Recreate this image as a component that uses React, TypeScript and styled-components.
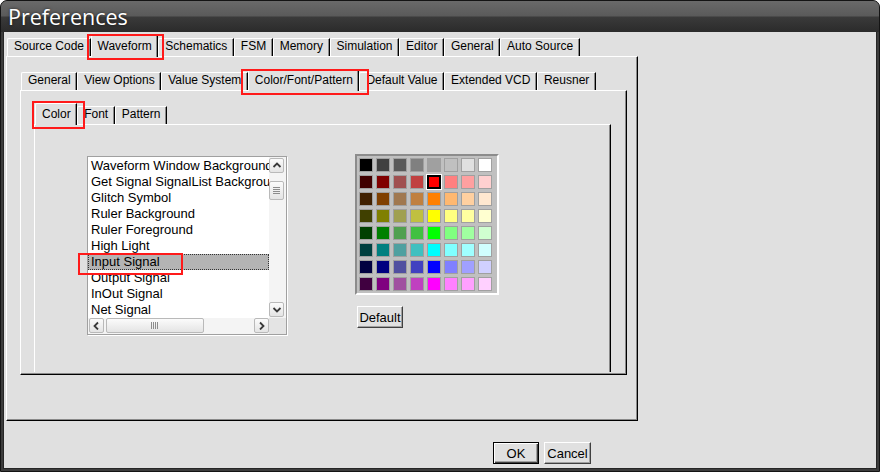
import React from "react";
import styled, { createGlobalStyle, css } from "styled-components";

const GlobalStyle = createGlobalStyle`
  html, body {
    margin: 0;
    padding: 0;
    background: #fff;
  }
  body {
    font-family: "Liberation Sans", Arial, sans-serif;
    font-size: 12px;
    color: #000;
  }
`;

const OUTER_TABS = ["Source Code", "Waveform", "Schematics", "FSM", "Memory", "Simulation", "Editor", "General", "Auto Source"];
const WAVE_TABS = ["General", "View Options", "Value System", "Color/Font/Pattern", "Default Value", "Extended VCD", "Reusner"];
const CFP_TABS = ["Color", "Font", "Pattern"];

const ITEMS = [
  "Waveform Window Background",
  "Get Signal SignalList Background",
  "Glitch Symbol",
  "Ruler Background",
  "Ruler Foreground",
  "High Light",
  "Input Signal",
  "Output Signal",
  "InOut Signal",
  "Net Signal",
];

const PALETTE = [
  ["#000000", "#404040", "#5a5a5a", "#808080", "#a0a0a0", "#c0c0c0", "#e0e0e0", "#ffffff"],
  ["#400000", "#800000", "#a05050", "#c04040", "#ff0000", "#ff8080", "#ffa0a0", "#ffd0d0"],
  ["#402000", "#804000", "#a07850", "#c08040", "#ff8000", "#ffb870", "#ffd0a0", "#ffe8d0"],
  ["#404000", "#808000", "#a0a050", "#c0c040", "#ffff00", "#ffff80", "#ffffa0", "#ffffd0"],
  ["#004000", "#008000", "#50a050", "#40c040", "#00ff00", "#80ff80", "#a0ffa0", "#d0ffd0"],
  ["#004040", "#008080", "#50a0a0", "#40c0c0", "#00ffff", "#80ffff", "#a0ffff", "#d0ffff"],
  ["#000040", "#000080", "#5050a0", "#4040c0", "#0000ff", "#8080ff", "#a0a0ff", "#d0d0ff"],
  ["#400040", "#800080", "#a050a0", "#c040c0", "#ff00ff", "#ff80ff", "#ffa0ff", "#ffd0ff"],
];

// red boxes drawn over the screenshot (annotations)
const MARKS = [
  { x: 86, y: 33, w: 77, h: 26 },
  { x: 240, y: 68, w: 128, h: 26 },
  { x: 31, y: 100, w: 53, h: 28 },
  { x: 77, y: 252, w: 105, h: 22 },
];

const Window = styled.div`
  position: relative;
  width: 880px;
  height: 472px;
  box-sizing: border-box;
  display: flex;
  flex-direction: column;
  background: #3c3c3c;
  border: 1px solid #141414;
  border-radius: 7px 7px 0 0;
  padding: 0 2px 2px;
  overflow: hidden;
`;

const TitleBar = styled.div`
  flex: none;
  height: 31px;
  margin: 0 -2px;
  padding: 0 7px;
  display: flex;
  align-items: center;
  background: linear-gradient(#6a6a6a 0, #5a5a5a 48%, #3a3a3a 52%, #2b2b2b 100%);
  color: #fff;
  font-family: "Open Sans", "Noto Sans", sans-serif;
  font-size: 21.5px;
  text-shadow: 0 0 3px rgba(0, 0, 0, 0.7);
`;

const Client = styled.div`
  flex: 1;
  display: flex;
  flex-direction: column;
  background: #e0e0e0;
  border: 1px solid #262626;
  border-top: none;
  padding: 3px 0 0 2px;
`;

const Notebook = styled.div<{ $width?: number }>`
  display: flex;
  flex-direction: column;
  ${(p) => p.$width && css`width: ${p.$width}px;`}
`;

const TabStrip = styled.div`
  display: flex;
  align-items: flex-end;
  height: 21px;
  padding-left: 1px;
`;

const Tab = styled.div<{ $active?: boolean }>`
  box-sizing: border-box;
  height: 18px;
  padding: 0 5.5px 3px 6px;
  display: flex;
  align-items: flex-end;
  line-height: 14px;
  white-space: nowrap;
  background: #e0e0e0;
  border-top: 1px solid #fff;
  border-left: 1px solid #fff;
  border-right: 1px solid #000;
  border-top-left-radius: 2px;
  box-shadow: inset -1px 0 0 #8a8a8a;
  ${(p) =>
    p.$active &&
    css`
      position: relative;
      z-index: 1;
      height: 22px;
      padding-bottom: 4px;
      margin-bottom: -1px;
    `}
`;

const Panel = styled.div<{ $pad: string; $open?: boolean }>`
  display: flex;
  flex-direction: column;
  padding: ${(p) => p.$pad};
  border-top: 1px solid #fff;
  border-left: 1px solid #fff;
  border-right: 1px solid #000;
  border-bottom: ${(p) => (p.$open ? "none" : "1px solid #000")};
  box-shadow: ${(p) => (p.$open ? "inset -1px 0 0 #8a8a8a" : "inset -1px -1px 0 #8a8a8a")};
`;

const ColorPage = styled.div`
  display: flex;
  align-items: flex-start;
  gap: 68px;
`;

const ListBox = styled.div`
  margin-top: 2px;
  width: 200px;
  height: 179px;
  box-sizing: border-box;
  border: 1px solid #a0a0a0;
  box-shadow: 1px 1px 0 #fff;
  background: #fff;
  display: grid;
  grid-template-columns: 181px 17px;
  grid-template-rows: 161px 16px;
`;

const Items = styled.div`
  overflow: hidden;
  padding-top: 1px;
`;

const Item = styled.div<{ $selected?: boolean }>`
  height: 16px;
  line-height: 16px;
  padding-left: 3px;
  font-size: 13px;
  white-space: nowrap;
  overflow: hidden;
  ${(p) =>
    p.$selected &&
    css`
      background: #b4b4b4;
      outline: 1px dotted #333;
      outline-offset: -1px;
    `}
`;

const VScroll = styled.div`
  display: flex;
  flex-direction: column;
  padding: 1px 2px 1px 0;
  background: #f4f4f4;
`;

const HScroll = styled.div`
  display: flex;
  padding: 0 0 0 1px;
  background: #f4f4f4;
`;

const Track = styled.div<{ $vertical?: boolean }>`
  flex: 1;
  display: flex;
  flex-direction: ${(p) => (p.$vertical ? "column" : "row")};
`;

const ScrollButton = styled.div`
  flex: none;
  width: 15px;
  height: 15px;
  box-sizing: border-box;
  display: flex;
  align-items: center;
  justify-content: center;
  border: 1px solid #b9b9b9;
  border-radius: 2px;
  background: linear-gradient(#fbfbfb, #e4e4e4);
`;

const Thumb = styled(ScrollButton)<{ $vertical?: boolean; $offset: number; $size: number }>`
  ${(p) =>
    p.$vertical
      ? css`
          margin-top: ${p.$offset}px;
          height: ${p.$size}px;
        `
      : css`
          margin-left: ${p.$offset}px;
          width: ${p.$size}px;
        `}
`;

const Corner = styled.div`
  background: #e4e4e4;
`;

const RightColumn = styled.div`
  display: flex;
  flex-direction: column;
  align-items: flex-start;
`;

const Palette = styled.div`
  width: 144px;
  box-sizing: border-box;
  padding: 2px;
  border: 2px solid;
  border-color: #8c8c8c #fff #fff #8c8c8c;
  background: #c0c0c0;
  display: grid;
  grid-template-columns: repeat(8, 14px);
  gap: 3px;
`;

const Swatch = styled.div<{ $color: string; $selected?: boolean }>`
  width: 14px;
  height: 14px;
  box-sizing: border-box;
  background: ${(p) => p.$color};
  border: 1px solid #a0a0a0;
  ${(p) =>
    p.$selected &&
    css`
      border: 2px solid #000;
      box-shadow: 0 0 0 1px #fff;
    `}
`;

const Button = styled.button<{ $default?: boolean; $width?: number }>`
  flex: none;
  width: ${(p) => p.$width ?? 46}px;
  height: 22px;
  padding: 0;
  font-family: "Liberation Sans", Arial, sans-serif;
  font-size: 13px;
  color: #000;
  background: #e0e0e0;
  border: 1px solid;
  border-color: #fff #404040 #404040 #fff;
  box-shadow: inset -1px -1px 0 #a0a0a0;
  ${(p) =>
    p.$default &&
    css`
      border: 1px solid #000;
      box-shadow: inset 1px 1px 0 #fff, inset -1px -1px 0 #404040, inset -2px -2px 0 #a0a0a0;
    `}
`;

const DefaultButton = styled(Button)`
  margin: 11px 0 0 2px;
`;

const ButtonRow = styled.div`
  display: flex;
  gap: 5px;
  margin-top: 21px;
  padding-left: 487px;
`;

const Mark = styled.div<{ $x: number; $y: number; $w: number; $h: number }>`
  position: absolute;
  left: ${(p) => p.$x}px;
  top: ${(p) => p.$y}px;
  width: ${(p) => p.$w}px;
  height: ${(p) => p.$h}px;
  box-sizing: border-box;
  border: 2px solid #ff1a1a;
  pointer-events: none;
  z-index: 5;
`;

const Arrow = ({ dir }: { dir: "up" | "down" | "left" | "right" }) => {
  const pts = {
    up: "1.5,6 5,2.5 8.5,6",
    down: "1.5,3 5,6.5 8.5,3",
    left: "6,1.5 2.5,5 6,8.5",
    right: "3,1.5 6.5,5 3,8.5",
  }[dir];
  return (
    <svg width="10" height="9" viewBox="0 0 10 9">
      <polyline points={pts} fill="none" stroke="#3a3a3a" strokeWidth="1.8" />
    </svg>
  );
};

const Grip = ({ vertical }: { vertical?: boolean }) =>
  vertical ? (
    <svg width="7" height="7" viewBox="0 0 7 7">
      {[0, 2, 4, 6].map((y) => (
        <line key={y} x1="0" x2="7" y1={y + 0.5} y2={y + 0.5} stroke="#8c8c8c" strokeWidth="1" />
      ))}
    </svg>
  ) : (
    <svg width="8" height="7" viewBox="0 0 8 7">
      {[0, 2, 4, 6].map((x) => (
        <line key={x} y1="0" y2="7" x1={x + 0.5} x2={x + 0.5} stroke="#8c8c8c" strokeWidth="1" />
      ))}
    </svg>
  );

const Tabs = ({ labels, active }: { labels: string[]; active: string }) => (
  <TabStrip>
    {labels.map((l) => (
      <Tab key={l} $active={l === active}>
        {l}
      </Tab>
    ))}
  </TabStrip>
);

export default function App() {
  return (
    <>
      <GlobalStyle />
      <Window>
        <TitleBar>Preferences</TitleBar>
        <Client>
          <Notebook $width={632}>
            <Tabs labels={OUTER_TABS} active="Waveform" />
            <Panel $pad="12px 10px 45px 13px">
              <Notebook>
                <Tabs labels={WAVE_TABS} active="Color/Font/Pattern" />
                <Panel $pad="12px 15px 2px 13px">
                  <Notebook>
                    <Tabs labels={CFP_TABS} active="Color" />
                    <Panel $pad="29px 0 37px 52px" $open>
                      <ColorPage>
                        <ListBox>
                          <Items>
                            {ITEMS.map((it) => (
                              <Item key={it} $selected={it === "Input Signal"}>
                                {it}
                              </Item>
                            ))}
                          </Items>
                          <VScroll>
                            <ScrollButton>
                              <Arrow dir="up" />
                            </ScrollButton>
                            <Track $vertical>
                              <Thumb $vertical $offset={8} $size={19}>
                                <Grip vertical />
                              </Thumb>
                            </Track>
                            <ScrollButton>
                              <Arrow dir="down" />
                            </ScrollButton>
                          </VScroll>
                          <HScroll>
                            <ScrollButton>
                              <Arrow dir="left" />
                            </ScrollButton>
                            <Track>
                              <Thumb $offset={2} $size={98}>
                                <Grip />
                              </Thumb>
                            </Track>
                            <ScrollButton>
                              <Arrow dir="right" />
                            </ScrollButton>
                          </HScroll>
                          <Corner />
                        </ListBox>
                        <RightColumn>
                          <Palette>
                            {PALETTE.map((row, r) =>
                              row.map((c, i) => (
                                <Swatch key={`${r}-${i}`} $color={c} $selected={r === 1 && i === 4} />
                              ))
                            )}
                          </Palette>
                          <DefaultButton>Default</DefaultButton>
                        </RightColumn>
                      </ColorPage>
                    </Panel>
                  </Notebook>
                </Panel>
              </Notebook>
            </Panel>
          </Notebook>
          <ButtonRow>
            <Button $default>OK</Button>
            <Button $width={47}>Cancel</Button>
          </ButtonRow>
        </Client>
        {MARKS.map((m, i) => (
          <Mark key={i} $x={m.x} $y={m.y} $w={m.w} $h={m.h} />
        ))}
      </Window>
    </>
  );
}
